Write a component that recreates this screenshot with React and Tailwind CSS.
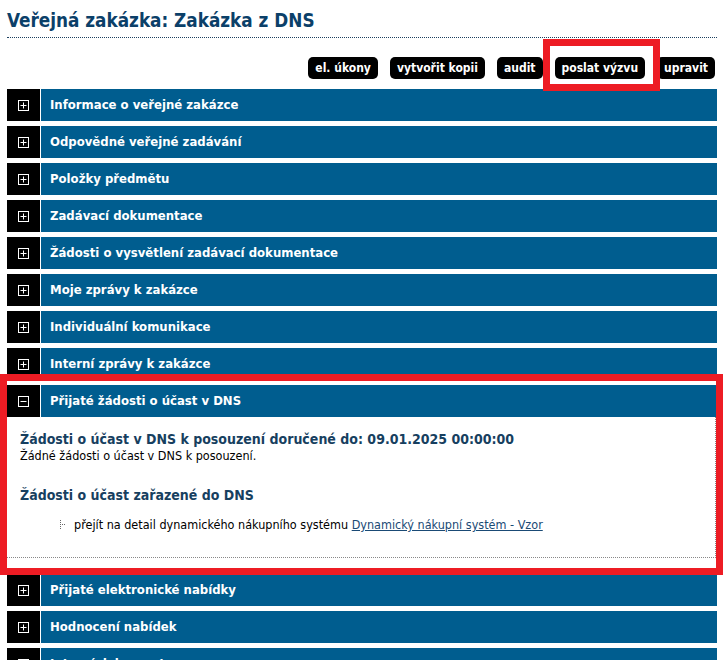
import { Fragment } from 'react';

const sections = [
  'Informace o veřejné zakázce',
  'Odpovědné veřejné zadávání',
  'Položky předmětu',
  'Zadávací dokumentace',
  'Žádosti o vysvětlení zadávací dokumentace',
  'Moje zprávy k zakázce',
  'Individuální komunikace',
  'Interní zprávy k zakázce',
];

const after = ['Přijaté elektronické nabídky', 'Hodnocení nabídek', 'Interní dokumenty'];

const buttons = ['el. úkony', 'vytvořit kopii', 'audit', 'poslat výzvu', 'upravit'];

function ToggleIcon({ open }) {
  return (
    <svg width="11" height="11" viewBox="0 0 11 11" className="block">
      <rect x="0.5" y="0.5" width="10" height="10" fill="none" stroke="white" strokeWidth="1" />
      <line x1="2.5" y1="5.5" x2="8.5" y2="5.5" stroke="white" strokeWidth="1" />
      {!open && <line x1="5.5" y1="2.5" x2="5.5" y2="8.5" stroke="white" strokeWidth="1" />}
    </svg>
  );
}

function SectionRow({ title, open }) {
  return (
    <div className="flex h-8 gap-px bg-white">
      <div className="flex w-[33px] items-center justify-center bg-black">
        <ToggleIcon open={open} />
      </div>
      <div className="flex flex-1 items-center bg-[#005d8f] pl-[9px] text-[13px] font-bold text-white">
        {title}
      </div>
    </div>
  );
}

function TreeBullet() {
  return (
    <svg width="6" height="10" viewBox="0 0 6 10" className="mr-[8px] block">
      {[0, 2, 4, 6, 8].map((y) => (
        <rect key={y} x="0" y={y} width="1" height="1" fill="#666" />
      ))}
      <rect x="2" y="4" width="1" height="1" fill="#666" />
      <rect x="4" y="4" width="1" height="1" fill="#666" />
    </svg>
  );
}

export default function App() {
  return (
    <div className="relative min-h-[660px] bg-white font-['DejaVu_Sans_Condensed','DejaVu_Sans',sans-serif]">
      <div className="mx-[7px] w-[710px]">
        {/* Title */}
        <h1 className="border-b border-dotted border-[#1c3f5e] pt-[8px] pb-[3px] text-[18.75px] leading-[26px] font-bold text-[#0b4069]">
          Veřejná zakázka: Zakázka z DNS
        </h1>

        {/* Action buttons */}
        <div className="mt-[19px] mb-[10px] flex justify-end gap-[12px] pr-[2px]">
          {buttons.map((b) => (
            <button
              key={b}
              type="button"
              className="h-[22px] rounded-[5px] bg-black px-[7px] text-[12px] font-bold text-white"
            >
              {b}
            </button>
          ))}
        </div>

        {/* Sections */}
        <div className="flex flex-col gap-[5px]">
          {sections.map((s) => (
            <SectionRow key={s} title={s} />
          ))}

          <div className="mb-[11px]">
            <SectionRow title="Přijaté žádosti o účast v DNS" open />
            <div className="mr-px border-r border-b border-dotted border-[#888] px-[13px] pt-[13px] pb-[24px]">
              <h2 className="text-[14px] leading-[18px] font-bold text-[#173f5f]">
                Žádosti o účast v DNS k posouzení doručené do: 09.01.2025 00:00:00
              </h2>
              <p className="text-[12.5px] leading-[15px] text-black">
                Žádné žádosti o účast v DNS k posouzení.
              </p>
              <h2 className="mt-[23px] text-[14px] leading-[18px] font-bold text-[#173f5f]">
                Žádosti o účast zařazené do DNS
              </h2>
              <ul className="mt-[13px] pl-[40px]">
                <li className="flex items-center text-[12.5px] leading-[16px] text-black">
                  <TreeBullet />
                  <span>
                    přejít na detail dynamického nákupního systému{' '}
                    <a href="#" className="text-[#1a4a75] underline">
                      Dynamický nákupní systém - Vzor
                    </a>
                  </span>
                </li>
              </ul>
            </div>
          </div>

          {after.map((s) => (
            <Fragment key={s}>
              <SectionRow title={s} />
            </Fragment>
          ))}
        </div>
      </div>

      {/* annotation highlights */}
      <div className="pointer-events-none absolute top-[39px] left-[543px] h-[52px] w-[117px] border-[7px] border-[#ed1c24]" />
      <div className="pointer-events-none absolute top-[374px] left-0 h-[201px] w-[723px] border-[7px] border-[#ed1c24]" />
    </div>
  );
}
